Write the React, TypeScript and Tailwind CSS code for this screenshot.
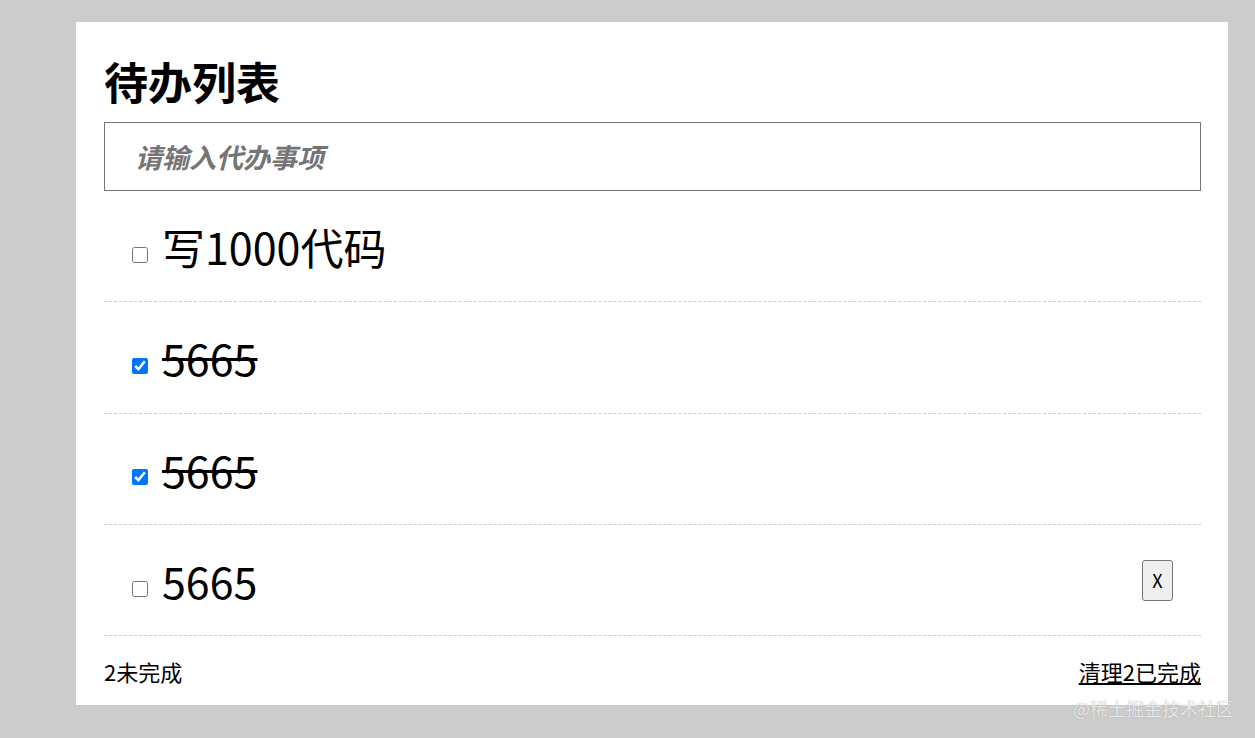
import React, { useState } from 'react';

interface Todo {
  id: number;
  text: string;
  done: boolean;
}

const initialTodos: Todo[] = [
  { id: 1, text: '写1000代码', done: false },
  { id: 2, text: '5665', done: true },
  { id: 3, text: '5665', done: true },
  { id: 4, text: '5665', done: false },
];

const font = { fontFamily: '"Noto Sans CJK SC", "Noto Sans", sans-serif' };

const TodoItem = ({ todo, showDelete, onToggle }: { todo: Todo; showDelete: boolean; onToggle: () => void }) => {
  return (
    <li className="flex h-[111.33px] items-center border-b border-dashed border-[#cccccc] pl-[28px] pr-[28px]">
      <input
        type="checkbox"
        checked={todo.done}
        onChange={onToggle}
        className="m-0 mt-[17px] h-[16px] w-[16px] accent-[#0075ff]"
      />
      <span className={`ml-[14px] flex-1 text-[43px] leading-[60px] text-black ${todo.done ? 'line-through decoration-[3px]' : ''}`}>
        {todo.text}
      </span>
      {showDelete && (
        <button className="h-[41px] w-[31px] rounded-[3px] border border-[#767676] bg-[#efefef] text-[18px] text-black">
          X
        </button>
      )}
    </li>
  );
};

export default function App() {
  const [todos, setTodos] = useState<Todo[]>(initialTodos);

  const toggle = (id: number) =>
    setTodos(todos.map((t) => (t.id === id ? { ...t, done: !t.done } : t)));

  const left = todos.filter((t) => !t.done).length;
  const finished = todos.filter((t) => t.done).length;

  return (
    <div className="relative min-h-screen bg-[#cccccc] pt-[22px]" style={font}>
      <div className="ml-[76px] w-[1152px] bg-white pl-[28px] pr-[27px] pt-[28px]">
        <h1 className="mb-[10px] text-[44px] font-bold leading-[62px] text-black">待办列表</h1>
        <input
          placeholder="请输入代办事项"
          className="block h-[69px] w-full border border-[#767676] pl-[30px] text-[27px] outline-none placeholder:font-bold placeholder:italic placeholder:text-[#757575]"
        />
        <ul>
          {todos.map((t, i) => (
            <TodoItem key={t.id} todo={t} showDelete={i === todos.length - 1} onToggle={() => toggle(t.id)} />
          ))}
        </ul>
        <div className="flex h-[69px] items-center justify-between pt-[2px] text-[22px] text-black">
          <span>{left}未完成</span>
          <a href="#" className="underline">清理{finished}已完成</a>
        </div>
      </div>
      <div className="absolute left-[1073px] top-[695px] text-[18px] text-white/80 [text-shadow:0_0_1px_rgba(0,0,0,0.35)]">
        @稀土掘金技术社区
      </div>
    </div>
  );
}
